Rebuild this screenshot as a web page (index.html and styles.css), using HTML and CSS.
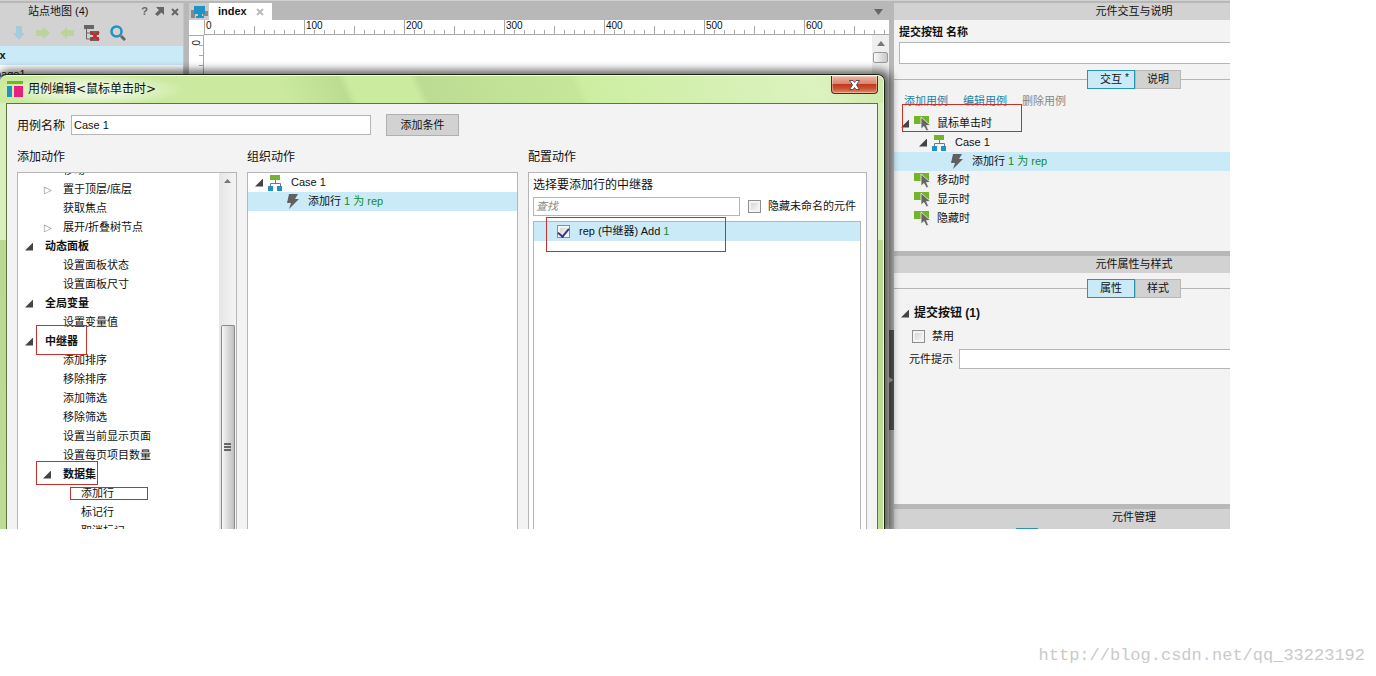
FILE: index.html
```html
<!DOCTYPE html>
<html lang="zh-CN">
<head>
<meta charset="utf-8">
<title>用例编辑</title>
<link rel="stylesheet" href="styles.css">
</head>
<body>
<svg class="defs" aria-hidden="true">
  <symbol id="i-case" viewBox="0 0 15 16"><path fill="#74b42a" d="M2 0h10v5H2z"/><path fill="none" stroke="#777" d="M7.500 5v3M2.500 11V8.500h10V11"/><path fill="#1f93c4" d="M0 11h5v5H0zM9 11h5v5H9z"/></symbol>
  <symbol id="i-bolt" viewBox="0 0 14 16"><path fill="#606060" d="M3 0h9L9 5h4L3 15l2-6H1z"/></symbol>
  <symbol id="i-event" viewBox="0 0 17 17"><path fill="#74b42a" d="M0 1h15v8H0z"/><path fill="#666" stroke="#f3f3f3" stroke-width=".8" d="M7 2v12l3-2.500 2.500 4.500 2-1-2-4.500h4z"/></symbol>
</svg>

<main class="workspace">
  <div class="panes">
    <aside class="sitemap">
      <header class="sitemap-head">
        <h2>站点地图 (4)</h2>
        <button type="button" class="tool" aria-label="帮助">?</button>
        <button type="button" class="tool" aria-label="弹出"><svg width="9" height="9" viewBox="0 0 9 9"><path fill="#666" d="M1 0h8v8L6.500 5.500 2.500 9 0 7l4-4z"/></svg></button>
        <button type="button" class="tool" aria-label="关闭"><svg width="8" height="8" viewBox="0 0 8 8"><path stroke="#666" stroke-width="2" d="M1 1l6 6M7 1L1 7"/></svg></button>
      </header>
      <div class="sitemap-tools">
        <button type="button" class="tool" aria-label="下移"><svg width="14" height="14" viewBox="0 0 14 14"><path fill="#a5cbdc" d="M4 0h6v7h3l-6 7-6-7h3z"/></svg></button>
        <button type="button" class="tool" aria-label="降级"><svg width="14" height="14" viewBox="0 0 14 14"><path fill="#bdd29c" d="M0 4h7V1l7 6-7 6v-3H0z"/></svg></button>
        <button type="button" class="tool" aria-label="升级"><svg width="14" height="14" viewBox="0 0 14 14"><path fill="#bdd29c" d="M14 4H7V1L0 7l7 6v-3h7z"/></svg></button>
        <button type="button" class="tool" aria-label="删除"><svg width="16" height="16" viewBox="0 0 16 16"><path fill="#666" d="M0 0h10v4H0zM6 6h9v4H6zM6 12h9v4H6z"/><path fill="none" stroke="#666" d="M2.500 4v10H6M2.500 8H6"/><path stroke="#d42027" stroke-width="2" d="M7 7l8 8M15 7l-8 8"/></svg></button>
        <button type="button" class="tool" aria-label="搜索"><svg width="16" height="16" viewBox="0 0 16 16"><circle cx="6.500" cy="6.500" r="5" fill="none" stroke="#1f93c4" stroke-width="2.500"/><path stroke="#666" stroke-width="3" d="M11 11l4 4"/></svg></button>
      </div>
      <ul class="pages"><li class="page-root">index</li><li class="page-child">page1</li></ul>
    </aside>

    <section class="canvas">
      <div class="tabs">
        <span class="pages-icon"><svg width="17" height="12" viewBox="0 0 17 12"><path fill="#888" d="M0 4h4v6H0zM12 5h5v5h-5zM0 10h4v2H0z"/><path fill="#1f93c4" d="M3 0h11v8h-3v2h2v2H5v-2h2V8H3z"/></svg></span>
        <span class="tab">index<button type="button" class="tool" aria-label="关闭标签"><svg width="8" height="8" viewBox="0 0 8 8"><path stroke="#bbb" stroke-width="2" d="M1 1l6 6M7 1L1 7"/></svg></button></span>
        <svg class="tabs-more" width="9" height="6" viewBox="0 0 9 6"><path fill="#666" d="M0 0h9L4.500 6z"/></svg>
      </div>
      <div class="ruler"><span>0</span><span>100</span><span>200</span><span>300</span><span>400</span><span>500</span><span>600</span></div>
      <div class="stage">
        <div class="vruler"><span>0</span></div>
        <div class="paper"></div>
        <div class="stage-scroll"><svg width="8" height="5" viewBox="0 0 8 5"><path fill="#777" d="M4 0l4 5H0z"/></svg><i class="stage-thumb"></i></div>
      </div>
    </section>

    <div class="splitter"><span class="handle"><svg width="4" height="6" viewBox="0 0 4 6"><path fill="#bbb" d="M0 0l4 3-4 3z"/></svg></span></div>

    <aside class="inspector">
      <div class="inspector-body">
        <h2 class="bar">元件交互与说明</h2>
        <label class="name-label" for="widget-name">提交按钮 名称</label>
        <input class="field name-field" id="widget-name" type="text">
        <div class="switch"><button type="button" class="seg active">交互<sup>*</sup></button><button type="button" class="seg">说明</button></div>
        <div class="links"><a href="#add">添加用例</a><a href="#edit">编辑用例</a><a class="off">删除用例</a></div>
        <ul class="tree">
          <li class="in1"><i class="open"></i><svg class="ico" width="17" height="17"><use href="#i-event"/></svg>鼠标单击时</li>
          <li class="in2"><i class="open"></i><svg class="ico" width="15" height="16"><use href="#i-case"/></svg>Case 1</li>
          <li class="in3 selected"><svg class="ico" width="14" height="16"><use href="#i-bolt"/></svg>添加行&nbsp;<em>1 为 rep</em></li>
          <li class="in-event"><svg class="ico" width="17" height="17"><use href="#i-event"/></svg>移动时</li>
          <li class="in-event"><svg class="ico" width="17" height="17"><use href="#i-event"/></svg>显示时</li>
          <li class="in-event"><svg class="ico" width="17" height="17"><use href="#i-event"/></svg>隐藏时</li>
        </ul>
        <h2 class="bar divided">元件属性与样式</h2>
        <div class="switch"><button type="button" class="seg active">属性</button><button type="button" class="seg">样式</button></div>
        <h3 class="group"><i class="open"></i>提交按钮 (1)</h3>
        <label class="disable"><input type="checkbox" class="check">禁用</label>
        <div class="hint"><label for="hint">元件提示</label><input class="field" id="hint" type="text"></div>
        <div class="manager"><h2 class="bar divided">元件管理</h2><i class="manager-tab"></i></div>
      </div>
    </aside>
  </div>

  <section class="dialog" role="dialog" aria-labelledby="dialog-title">
    <header class="titlebar">
      <svg class="logo" width="16" height="16" viewBox="0 0 16 16"><path fill="#74b42a" d="M0 0h16v3H0z"/><path fill="#1f93c4" d="M0 5h5v11H0z"/><path fill="#e6217e" d="M7 5h9v11H7z"/></svg>
      <h1 id="dialog-title">用例编辑&lt;鼠标单击时&gt;</h1>
      <button type="button" class="close" aria-label="关闭"><svg width="11" height="10" viewBox="0 0 11 10"><path fill="#fff" stroke="#5b4b55" d="M.5.500h3.500l1.500 2L7 .500h3.500L7.500 5l3 4.500H7l-1.500-2-1.500 2H.5l3-4.500z"/></svg></button>
    </header>
    <div class="dialog-body">
      <div class="case-row">
        <label for="case-name">用例名称</label>
        <input class="field" id="case-name" type="text" value="Case 1">
        <button type="button" class="push">添加条件</button>
      </div>
      <div class="columns">
        <section class="column">
          <h2>添加动作</h2>
          <div class="box actions">
            <ul>
              <li class="in2"><i class="slot"></i>移动</li>
              <li class="in2"><i class="slot shut"></i>置于顶层/底层</li>
              <li class="in2"><i class="slot"></i>获取焦点</li>
              <li class="in2"><i class="slot shut"></i>展开/折叠树节点</li>
              <li class="in1 head"><i class="slot open"></i>动态面板</li>
              <li class="in2"><i class="slot"></i>设置面板状态</li>
              <li class="in2"><i class="slot"></i>设置面板尺寸</li>
              <li class="in1 head"><i class="slot open"></i>全局变量</li>
              <li class="in2"><i class="slot"></i>设置变量值</li>
              <li class="in1 head"><i class="slot open"></i>中继器</li>
              <li class="in2"><i class="slot"></i>添加排序</li>
              <li class="in2"><i class="slot"></i>移除排序</li>
              <li class="in2"><i class="slot"></i>添加筛选</li>
              <li class="in2"><i class="slot"></i>移除筛选</li>
              <li class="in2"><i class="slot"></i>设置当前显示页面</li>
              <li class="in2"><i class="slot"></i>设置每页项目数量</li>
              <li class="in2 head"><i class="slot open"></i>数据集</li>
              <li class="in4"><i class="slot"></i>添加行</li>
              <li class="in4"><i class="slot"></i>标记行</li>
              <li class="in4"><i class="slot"></i>取消标记</li>
            </ul>
            <div class="scroll"><svg width="7" height="4" viewBox="0 0 7 4"><path fill="#777" d="M3.500 0L7 4H0z"/></svg><div class="thumb"><i></i></div></div>
          </div>
        </section>
        <section class="column">
          <h2>组织动作</h2>
          <div class="box">
            <ul class="tree">
              <li class="in1"><i class="open"></i><svg class="ico" width="15" height="16"><use href="#i-case"/></svg>Case 1</li>
              <li class="in-bolt selected"><svg class="ico" width="14" height="16"><use href="#i-bolt"/></svg>添加行&nbsp;<em>1 为 rep</em></li>
            </ul>
          </div>
        </section>
        <section class="column">
          <h2>配置动作</h2>
          <div class="box config">
            <h3>选择要添加行的中继器</h3>
            <div class="find"><input class="field" type="text" placeholder="查找" aria-label="查找"><label><input type="checkbox" class="check">隐藏未命名的元件</label></div>
            <div class="targets"><label class="target"><input type="checkbox" class="check" checked>rep (中继器) Add&nbsp;<em>1</em></label></div>
          </div>
        </section>
      </div>
    </div>
  </section>

  <div class="mark mark-event"></div>
  <div class="mark mark-target"></div>
  <div class="mark mark-repeater"></div>
  <div class="mark mark-dataset"></div>
  <div class="mark mark-addrow"></div>
</main>
<footer class="credit">http://blog.csdn.net/qq_33223192</footer>
</body>
</html>
```
FILE: styles.css
```css
* { box-sizing: border-box; }
body {
  margin: 0;
  min-height: 100vh;
  display: flex;
  flex-direction: column;
  background: #fff;
  color: #111;
  font: 11px/19px "Liberation Sans", "Noto Sans CJK SC", sans-serif;
}
h1, h2, h3, ul { margin: 0; padding: 0; list-style: none; font-size: 11px; font-weight: normal; }
button, input { font: inherit; color: inherit; }
em { font-style: normal; color: #128a2c; }
.defs { position: absolute; width: 0; height: 0; }
.tool { display: flex; align-items: center; padding: 0; border: 0; background: none; color: #666; }
.field { height: 20px; min-width: 0; padding: 0 2px; border: 1px solid #b5b5b5; border-radius: 0; background: #fff; outline: 0; }

.workspace { position: relative; flex: 1 0 0; min-height: 0; margin-right: 146px; overflow: hidden; background: #b8b8b8; border-top: 1px solid #d0d0d0; }
.panes { display: grid; grid-template-columns: 184px minmax(0, 1fr) 5px 336px; height: 100%; padding-top: 2px; }

/* Site map */
.sitemap { background: #d2d2d2; overflow: hidden; border-right: 1px solid #c4c4c4; }
.sitemap-head { display: flex; align-items: center; gap: 7px; height: 17px; padding: 0 4px 0 28px; font-weight: bold; }
.sitemap-head h2 { flex: 1; }
.sitemap-tools { display: flex; align-items: center; gap: 10px; height: 26px; padding-left: 12px; }
.pages { background: #fff; height: 60px; }
.page-root { background: #cbeaf7; font-weight: bold; text-indent: -23px; }
.page-child { text-indent: -5px; }

/* Canvas */
.canvas { display: flex; flex-direction: column; margin-left: 5px; background: #fff; }
.tabs { display: flex; align-items: center; height: 17px; background: #b8b8b8; padding-right: 6px; }
.pages-icon { display: flex; align-items: center; align-self: stretch; width: 20px; padding-left: 2px; background: #ccc; }
.tab { display: flex; align-items: center; gap: 9px; height: 17px; padding: 0 8px 0 9px; background: #fff; font-weight: bold; }
.tabs-more { margin-left: auto; }
.ruler {
  display: flex;
  height: 15px;
  margin-left: 15px;
  overflow: hidden;
  border-bottom: 1px solid #a8a8a8;
  font-size: 10px;
  line-height: 12px;
  background:
    repeating-linear-gradient(90deg, #a8a8a8 0 1px, transparent 1px 100px) 0 0 / 100% 100% no-repeat,
    repeating-linear-gradient(90deg, #a8a8a8 0 1px, transparent 1px 50px) 0 100% / 100% 8px no-repeat,
    repeating-linear-gradient(90deg, #a8a8a8 0 1px, transparent 1px 10px) 0 100% / 100% 4px no-repeat;
}
.ruler span { flex: 0 0 100px; padding-left: 2px; }
.stage { display: flex; flex: 1; }
.vruler { width: 15px; padding-top: 4px; border-right: 1px solid #a8a8a8; border-top: 1px solid #a8a8a8; background: repeating-linear-gradient(#fff 0 9px, #a8a8a8 9px 10px) 100% 0 / 4px 100% no-repeat; }
.vruler span { display: block; width: 12px; font-size: 10px; line-height: 12px; writing-mode: vertical-rl; }
.paper { flex: 1; }
.stage-scroll { display: flex; flex-direction: column; align-items: center; gap: 6px; width: 17px; padding-top: 6px; background: #eee; }
.stage-thumb { width: 15px; height: 11px; border: 1px solid #999; border-radius: 2px; background: linear-gradient(90deg, #fafafa, #c8c8c8); }
.splitter { display: flex; }
.handle { display: flex; align-items: center; width: 5px; height: 100px; margin-top: 327px; background: #585858; }

/* Inspector */
.inspector { overflow: hidden; background: #f3f3f3; }
.inspector-body { display: flex; flex-direction: column; width: 480px; height: 100%; }
.bar { flex: none; height: 17px; line-height: 17px; text-align: center; background: #d2d2d2; }
.bar.divided { height: 22px; border-top: 5px solid #b8b8b8; }
.name-label { height: 22px; padding: 3px 5px 0; font-weight: bold; }
.name-field { flex: none; height: 22px; margin: 0 5px; }
.switch { display: flex; flex: none; justify-content: center; height: 19px; margin-top: 6px; background: linear-gradient(#b5b5b5, #b5b5b5) 0 9px / 100% 1px no-repeat; }
.seg { position: relative; width: 46px; padding: 0; border: 1px solid #b8b8b8; background: #d2d2d2; line-height: 17px; }
.seg.active { width: 48px; border-color: #2a93b8; background: #cbeaf7; }
.seg sup { position: absolute; top: -2px; right: 5px; line-height: 17px; font-size: 10px; }
.links { display: flex; gap: 15px; height: 25px; padding: 3px 10px 0; }
.links a { color: #1a7fa8; text-decoration: none; }
.links .off { color: #888; }
.tree li { display: flex; align-items: center; height: 19px; white-space: nowrap; }
.tree .open { margin-right: 5px; }
.ico { margin-right: 8px; flex: none; }
.tree .ico[width="17"] { margin-right: 6px; }
.tree .ico[width="14"] { margin-right: 8px; }
.selected { background: #cbeaf7; }
.in1 { padding-left: 7px; }
.in2 { padding-left: 25px; }
.in3 { padding-left: 56px; }
.in4 { padding-left: 43px; }
.in-event { padding-left: 20px; }
.in-bolt { padding-left: 38px; }
.open::before { content: ""; display: block; width: 8px; height: 8px; background: #444; clip-path: polygon(100% 0, 100% 100%, 0 100%); }
.inspector .tree + .bar { margin-top: 23px; }
.group { display: flex; align-items: center; gap: 5px; height: 31px; padding-left: 7px; font-size: 12px; font-weight: bold; }
.disable { display: flex; align-items: center; gap: 7px; height: 15px; padding-left: 18px; }
.hint { display: flex; align-items: center; gap: 6px; margin-top: 5px; padding-left: 15px; height: 20px; }
.hint .field { flex: 1; }
.check { appearance: none; display: flex; justify-content: center; align-items: flex-start; flex: none; width: 13px; height: 13px; margin: 0; border: 1px solid #8e8f8f; background: linear-gradient(135deg, #ccc, #fff); box-shadow: inset 0 0 0 2px #f4f4f4; }
.check:checked::after { content: ""; width: 5px; height: 9px; border: solid #34358c; border-width: 0 2px 2px 0; transform: rotate(40deg); }
.manager { margin-top: auto; background: #d2d2d2; }
.manager .bar { height: 24px; }
.manager-tab { display: block; width: 22px; height: 1px; margin-left: 122px; background: #2a93b8; }

/* Case editor window */
.dialog {
  position: absolute;
  left: 0; right: 345px; top: 73px; bottom: 0;
  display: flex;
  flex-direction: column;
  padding: 0 6px;
  border: solid #1c2414;
  border-width: 1px 1px 0 0;
  border-radius: 7px 7px 0 0;
  background: linear-gradient(#d9efbd 28px, #d9efbd 165px, #bbd893 165px, #bfdc97);
  box-shadow: inset -1px 1px 0 #f2fbe4, 2px 0 9px 4px rgba(0, 0, 0, .6);
}
.titlebar {
  display: flex;
  align-items: flex-start;
  height: 27px;
  margin: 1px -5px 0 -6px;
  padding-left: 7px;
  border-radius: 6px 6px 0 0;
  background:
    radial-gradient(ellipse 95px 16px at 90px 14px, #e9f6d8 40%, transparent),
    linear-gradient(65deg, transparent 32%, #bcdc92 39%, #cbeb9f 40%, #cbeb9f 47%, #bddc93 48%, #c6e79a 65%, #cdeea1 66%, #dcf2c0 92%, #cde8a8),
    #cbea9f;
}
.logo { margin-top: 5px; }
.titlebar h1 { flex: 1; padding: 4px 5px 0; font: 12px/19px "DejaVu Sans", "Noto Sans CJK SC", sans-serif; }
.close { display: flex; align-items: center; justify-content: center; width: 47px; height: 18px; margin-right: 5px; padding: 0; border: 1px solid #5c2618; border-top: 0; border-radius: 0 0 4px 4px; background: linear-gradient(#eeb4a3, #d98671 45%, #c03a1c 50%, #cc5534 75%, #e38c6c); box-shadow: inset 0 0 0 1px rgba(255, 255, 255, .35); }
.dialog-body { display: flex; flex-direction: column; flex: 1; min-height: 0; padding: 10px 10px 0; border: 1px solid #5f743f; border-bottom: 0; background: #f3f3f3; }
.case-row { display: flex; align-items: center; height: 22px; font-size: 12px; }
.case-row label { padding-top: 2px; }
.case-row .field { width: 300px; margin: 0 15px 0 6px; font-size: 11px; }
.push { width: 73px; height: 22px; padding: 0; border: 1px solid #b0b0b0; background: #d2d2d2; font-size: 11px; }
.columns { display: grid; grid-template-columns: 220fr 271fr 339fr; gap: 10px; flex: 1; min-height: 0; margin-top: 12px; }
.column { display: flex; flex-direction: column; min-width: 0; min-height: 0; }
.column h2 { height: 24px; line-height: 19px; font-size: 12px; }
.box { flex: 1; min-height: 0; overflow: hidden; border: 1px solid #b5b5b5; border-bottom: 0; background: #fff; }
.actions { display: flex; }
.actions ul { flex: 1; margin-top: -12px; }
.actions li { display: flex; align-items: center; height: 19px; white-space: nowrap; }
.head { font-weight: bold; }
.slot { width: 20px; }
.shut::before { content: "▷"; display: block; margin-left: 1px; font: 10px/19px "DejaVu Sans", sans-serif; color: #888; }
.scroll { display: flex; flex-direction: column; align-items: center; width: 17px; padding-top: 6px; background: linear-gradient(90deg, #e6e6e6, #f4f4f4); }
.thumb { display: flex; justify-content: center; width: 14px; flex: 1; margin-top: 142px; border: 1px solid #8b8b8b; border-bottom: 0; border-radius: 2px 2px 0 0; background: linear-gradient(90deg, #f6f6f6, #dcdcdc 45%, #c0c0c4); }
.thumb i { width: 7px; height: 8px; margin-top: 117px; background: repeating-linear-gradient(#666 0 2px, transparent 2px 3px); }
.config { display: flex; flex-direction: column; padding: 3px 5px 0 4px; }
.config h3 { height: 21px; font-size: 12px; }
.find { display: flex; align-items: center; height: 19px; }
.find .field { flex: 1; height: 19px; margin-right: 8px; }
.find .field::placeholder { color: #888; font-style: italic; }
.find label { display: flex; align-items: center; gap: 7px; padding-right: 5px; }
.targets { flex: 1; margin-top: 5px; border: 1px solid #b5b5b5; border-bottom: 0; }
.target { display: flex; align-items: center; height: 19px; padding-left: 23px; background: #cbeaf7; }
.target .check { margin-right: 9px; }

/* Callout frames drawn over the windows */
.mark { position: absolute; border: 1px solid #c4302c; pointer-events: none; }
.mark-event { right: 208px; top: 103px; width: 120px; height: 28px; }
.mark-target { left: 546px; top: 216px; width: 180px; height: 35px; }
.mark-repeater { left: 36px; top: 324px; width: 51px; height: 30px; }
.mark-dataset { left: 36px; top: 460px; width: 62px; height: 24px; }
.mark-addrow { left: 70px; top: 486px; width: 78px; height: 13px; }

.credit { flex: none; height: 147px; padding: 117px 11px 0; text-align: right; color: #cacaca; font: 17px/20px "Liberation Mono", monospace; }
```
